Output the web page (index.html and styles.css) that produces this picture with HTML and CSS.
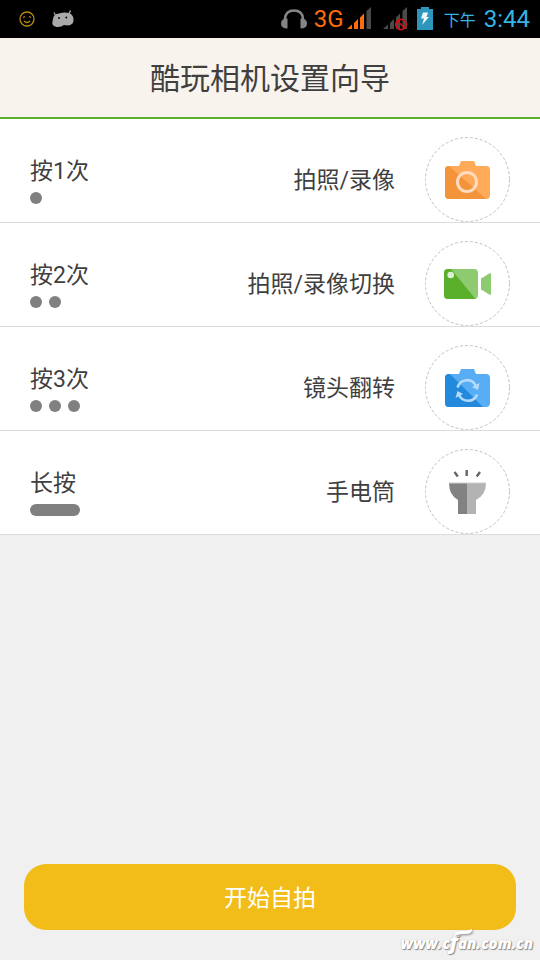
FILE: index.html
```html
<!DOCTYPE html>
<html lang="zh-CN">
<head>
<meta charset="utf-8">
<meta name="viewport" content="width=device-width, initial-scale=1">
<title>酷玩相机设置向导</title>
<link rel="stylesheet" href="styles.css">
</head>
<body>
<div class="status">
  <svg width="16" height="16" viewBox="0 0 16 16" fill="none" stroke="#b8890c" stroke-width="1.3"><circle cx="8" cy="8" r="7"/><path d="M4 6.500l2-1M10 5.500l2 1M5 10q3 3 6 0"/></svg>
  <svg class="droid" width="22" height="18" viewBox="0 0 22 18"><path d="M2 2.500l2 4M18.500.5l-1.500 3.500" stroke="#aaa" stroke-width="1.300"/><path d="M1 9Q1.500 4 7 3.500Q12 2 17 3Q22 5 21.500 10.500Q21 15 16 15.500L12 15Q9 17.500 4.500 17Q0 16 .3 12.500z" fill="#aaa"/><circle cx="7" cy="8" r="1" fill="#111"/><circle cx="14.300" cy="7.500" r="1" fill="#111"/></svg>
  <div class="tray">
    <svg width="26" height="20" viewBox="0 0 26 20"><path d="M4 14V10Q4.500 1.500 13 1.500T22 10V14" fill="none" stroke="#858585" stroke-width="2.600"/><path d="M6.500 9.500v10Q0 19.500 0 14.500T6.500 9.500M19.500 9.500v10Q26 19.500 26 14.500T19.500 9.500" fill="#858585"/></svg>
    <span class="net">3G</span>
    <svg class="signal" width="24" height="24" viewBox="0 0 24 24"><path d="M0 22l5-4.500V22zM7 16l4-4v10H7zM13 10.500l4-4V22h-4z" fill="#ff6c0c"/><path d="M19.500 4L24 0v22h-4.500z" fill="#4a4a4a"/></svg>
    <svg class="signal off" width="24" height="24" viewBox="0 0 24 24"><path d="M0 22l5-4.500V22zM7 16l4-4v10H7zM13 10.500l4-4V22h-4zM19.500 4L24 0v22h-4.500z" fill="#4a4a4a"/><g fill="none" stroke="#d40f0f" stroke-width="1.600"><circle cx="18" cy="17.500" r="5.200"/><path d="M14.500 14l7 7"/></g></svg>
    <svg class="battery" width="16" height="24" viewBox="0 0 16 24"><path d="M4 0h8v2h4v21H0V2h4z" fill="#2e95bd"/><path d="M6 5.500h5L9.500 10H12L5 18l2-6.500H4z" fill="#edf7fa"/></svg>
    <span class="ampm">下午</span>
    <span class="clock">3:44</span>
  </div>
</div>
<header class="title"><h1>酷玩相机设置向导</h1></header>
<main>
  <ul class="steps">
    <li class="step">
      <div class="press"><span>按1次</span><div class="dots"><i></i></div></div>
      <span class="action">拍照/录像</span>
      <svg class="icon" viewBox="0 0 85 85"><circle class="rim" cx="42.500" cy="42.500" r="42"/><path d="M24 29h10l2-5h13l2 5h10q4 0 4 4v25q0 4-4 4H24q-4 0-4-4V33q0-4 4-4z" fill="#ffaa59"/><path d="M24 29L61 62H24q-4 0-4-4V33q0-4 4-4z" fill="#f4943a"/><circle cx="42" cy="45" r="9.500" fill="none" stroke="#ffdcc0" stroke-width="3"/></svg>
    </li>
    <li class="step">
      <div class="press"><span>按2次</span><div class="dots"><i></i><i></i></div></div>
      <span class="action">拍照/录像切换</span>
      <svg class="icon" viewBox="0 0 85 85"><circle class="rim" cx="42.500" cy="42.500" r="42"/><rect x="19" y="28" width="34" height="30" rx="4" fill="#8dca70"/><path d="M26 28l24.500 30H23q-4 0-4-4V32q0-4 4-4z" fill="#5ab02a"/><circle cx="25.700" cy="34" r="3.300" fill="#def0d4"/><path d="M57 37l8-5q1 0 1 1v20q0 1-1 1l-8-5q-1 0-1-1V38q0-1 1-1z" fill="#8dca70"/></svg>
    </li>
    <li class="step">
      <div class="press"><span>按3次</span><div class="dots"><i></i><i></i><i></i></div></div>
      <span class="action">镜头翻转</span>
      <svg class="icon" viewBox="0 0 85 85"><circle class="rim" cx="42.500" cy="42.500" r="42"/><path d="M24 29h10l2-5h13l2 5h10q4 0 4 4v25q0 4-4 4H24q-4 0-4-4V33q0-4 4-4z" fill="#58aef4"/><path d="M25 29L58 62H24q-4 0-4-4V33q0-4 4-4z" fill="#2289dc"/><g fill="none" stroke="#b5dafb" stroke-width="2.600"><path d="M32.500 42.500C35.500 33.500 47 32.500 51 41"/><path d="M52 49.500C49 58 37.500 57.500 34 50"/></g><path d="M47 42l7.500-4-1.500 7zM38 49L32.500 46 30.500 53z" fill="#b5dafb"/></svg>
    </li>
    <li class="step">
      <div class="press"><span>长按</span><div class="dots"><i class="long"></i></div></div>
      <span class="action">手电筒</span>
      <svg class="icon" viewBox="0 0 85 85"><circle class="rim" cx="42.500" cy="42.500" r="42"/><path d="M24 34h18v31h-9V51q-9-5-9-17z" fill="#828282"/><path d="M42 34h19q0 12-10 17v14h-9z" fill="#b3b3b3"/><path d="M24 34h37" stroke="#c9d0cb"/><path d="M41.700 21v6M29.500 23l3.300 4.500M55 23l-3.300 4.500" stroke="#666" stroke-width="2.400"/></svg>
    </li>
  </ul>
</main>
<footer class="foot">
  <button type="button" class="start">开始自拍</button>
  <div class="mark">www.c<span class="f">f</span>an.com.cn<svg class="swoosh" width="20" height="7" viewBox="0 0 20 7"><path d="M1 7Q2 2 9 2Q15 2 19 0Q20 5 12 5Q5 5 1 7z" fill="#fff"/></svg></div>
</footer>
</body>
</html>
```
FILE: styles.css
```css
* { box-sizing: border-box; }
body {
  margin: 0;
  min-height: 100vh;
  display: flex;
  flex-direction: column;
  background: #f0f0f0;
  color: #3f3f3f;
  font-family: Roboto, "Noto Sans CJK SC", sans-serif;
}
.status {
  display: flex;
  align-items: center;
  height: 38px;
  padding: 0 10px 0 19px;
  background: #000;
}
.droid { margin-left: 17px; }
.tray {
  display: flex;
  align-items: center;
  margin-left: auto;
  color: #33b5e5;
  line-height: 36px;
}
.net {
  margin-left: 7px;
  color: #ff6c0c;
  font-size: 24px;
}
.signal { margin-left: 3px; }
.signal.off { margin-left: 12px; }
.battery { margin-left: 10px; }
.ampm {
  margin: 4px 0 0 11px;
  font-size: 16px;
}
.clock {
  margin-left: 8px;
  font-size: 24px;
}
.title {
  padding: 19px 0 17px;
  border-bottom: 2px solid #5ab02a;
  background: #f8f3ed;
  text-align: center;
}
h1 {
  margin: 0;
  font-size: 30px;
  font-weight: 400;
  line-height: 43px;
}
.steps {
  margin: 0;
  padding: 0;
  list-style: none;
  font-size: 23px;
  line-height: 30px;
}
.step {
  display: flex;
  align-items: flex-end;
  padding: 18px 30px 0;
  border-bottom: 1px solid #dcdcdc;
  background: #fff;
}
.press {
  flex: 1;
  padding-bottom: 18px;
}
.dots {
  display: flex;
  gap: 7px;
  margin-top: 5px;
}
.dots i {
  width: 12px;
  height: 12px;
  border-radius: 6px;
  background: #808080;
}
.dots .long { width: 50px; }
.action {
  align-self: center;
  margin-right: 30px;
  padding-top: 2px;
}
.icon {
  width: 85px;
  height: 85px;
}
.rim {
  fill: none;
  stroke: #c0c0c0;
  stroke-dasharray: 3 2;
}
.foot {
  position: relative;
  margin-top: auto;
  padding: 0 24px 30px;
}
.start {
  display: block;
  width: 100%;
  height: 66px;
  padding: 0 0 2px;
  border: 0;
  border-radius: 22px;
  background: #f2bc19;
  color: #fff;
  font: inherit;
  font-size: 23px;
}
.mark {
  position: absolute;
  right: 7px;
  bottom: 7px;
  color: #fff;
  font: italic 800 15px/20px "Open Sans", sans-serif;
  text-shadow: 1px 1px 1px #888, 0 0 1px #aaa;
}
.f { font-size: 20px; }
.swoosh {
  position: absolute;
  left: 52px;
  top: -3px;
  filter: drop-shadow(1px 1px 1px #888);
}
```
